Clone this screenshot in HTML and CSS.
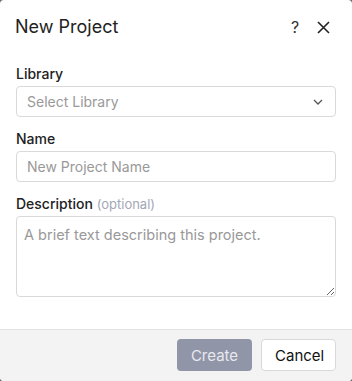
FILE: index.html
```html
<!DOCTYPE html>
<html lang="en">
<head>
  <meta charset="UTF-8">
  <meta name="viewport" content="width=device-width, initial-scale=1.0">
  <title>New Project</title>
  <link rel="stylesheet" href="styles.css">
</head>
<body>
  <!-- New Project Dialog -->
  <div class="dialog">
    <div class="dialog-header">
      <h2 class="dialog-title">New Project</h2>
      <div class="header-actions">
        <button class="icon-btn help-btn" title="Help">?</button>
        <button class="icon-btn close-btn" title="Close">
          <svg width="13" height="13" viewBox="0 0 13 13">
            <path d="M1 1 L12 12 M12 1 L1 12" stroke="#222" stroke-width="1.6" fill="none"/>
          </svg>
        </button>
      </div>
    </div>

    <form class="dialog-body">
      <div class="field">
        <label for="library">Library</label>
        <div class="select-wrap">
          <select id="library" class="control select">
            <option value="" selected>Select Library</option>
          </select>
          <svg class="chevron" width="10" height="6" viewBox="0 0 10 6">
            <path d="M1 1 L5 5 L9 1" stroke="#555" stroke-width="1.3" fill="none"/>
          </svg>
        </div>
      </div>

      <div class="field">
        <label for="name">Name</label>
        <input type="text" id="name" class="control" placeholder="New Project Name">
      </div>

      <div class="field">
        <label for="description">Description <span class="optional">(optional)</span></label>
        <textarea id="description" class="control textarea" placeholder="A brief text describing this project."></textarea>
      </div>
    </form>

    <div class="dialog-footer">
      <button class="btn btn-primary" disabled>Create</button>
      <button class="btn btn-secondary">Cancel</button>
    </div>
  </div>
</body>
</html>
```

FILE: styles.css
```css
:root {
  --text-color: #222;
  --placeholder-color: #999;
  --border-color: #d9d9d9;
  --footer-color: #f3f3f3;
  --disabled-color: #9195a8;
  --font-family: 'Inter', 'Noto Sans', sans-serif;
}

/* General Reset */
* {
  margin: 0;
  padding: 0;
  box-sizing: border-box;
}

body {
  font-family: var(--font-family);
  background: #6b6b6b;
  color: var(--text-color);
}

/* Dialog */
.dialog {
  height: 100vh;
  background: #fff;
  border-radius: 4px;
  display: flex;
  flex-direction: column;
  overflow: hidden;
}

.dialog-header {
  display: flex;
  justify-content: space-between;
  align-items: center;
  padding: 16px 22px 0 15px;
}

.dialog-title {
  font-size: 18px;
  font-weight: 400;
  line-height: 22px;
  color: var(--text-color);
}

.header-actions {
  display: flex;
  align-items: center;
  gap: 14px;
}

.icon-btn {
  background: none;
  border: none;
  cursor: pointer;
  display: flex;
  align-items: center;
  justify-content: center;
  width: 14px;
  height: 22px;
  font-family: var(--font-family);
  color: #333;
}

.help-btn {
  font-size: 16px;
}

/* Form */
.dialog-body {
  padding: 26px 16px 0 16px;
  display: flex;
  flex-direction: column;
  gap: 12px;
}

.field {
  display: flex;
  flex-direction: column;
}

label {
  font-size: 14px;
  font-weight: 500;
  line-height: 20px;
  margin-bottom: 2px;
  color: var(--text-color);
}

.optional {
  font-size: 13px;
  font-weight: 400;
  color: #a3a7b5;
}

.control {
  width: 100%;
  height: 31px;
  padding: 0 10px;
  font-family: var(--font-family);
  font-size: 14px;
  color: var(--text-color);
  background: #fff;
  border: 1px solid var(--border-color);
  border-radius: 4px;
  outline: none;
}

.control::placeholder {
  color: var(--placeholder-color);
}

.select-wrap {
  position: relative;
}

.select {
  appearance: none;
  color: var(--placeholder-color);
}

.chevron {
  position: absolute;
  right: 13px;
  top: 13px;
  pointer-events: none;
}

.textarea {
  height: 81px;
  padding: 8px 7px;
  font-size: 14.5px;
  line-height: 20px;
  resize: vertical;
}

/* Footer */
.dialog-footer {
  margin-top: auto;
  height: 52px;
  border-top: 1px solid #e2e2e2;
  background: var(--footer-color);
  display: flex;
  justify-content: flex-end;
  align-items: flex-start;
  gap: 9px;
  padding: 9px 16px 0 16px;
}

.btn {
  height: 32px;
  padding: 0 13px;
  font-family: var(--font-family);
  font-size: 15px;
  border-radius: 4px;
  cursor: pointer;
}

.btn-primary {
  width: 75px;
  background: var(--disabled-color);
  color: #e8e9ef;
  border: none;
}

.btn-secondary {
  width: 75px;
  background: #fff;
  color: #111;
  border: 1px solid var(--border-color);
}
```
